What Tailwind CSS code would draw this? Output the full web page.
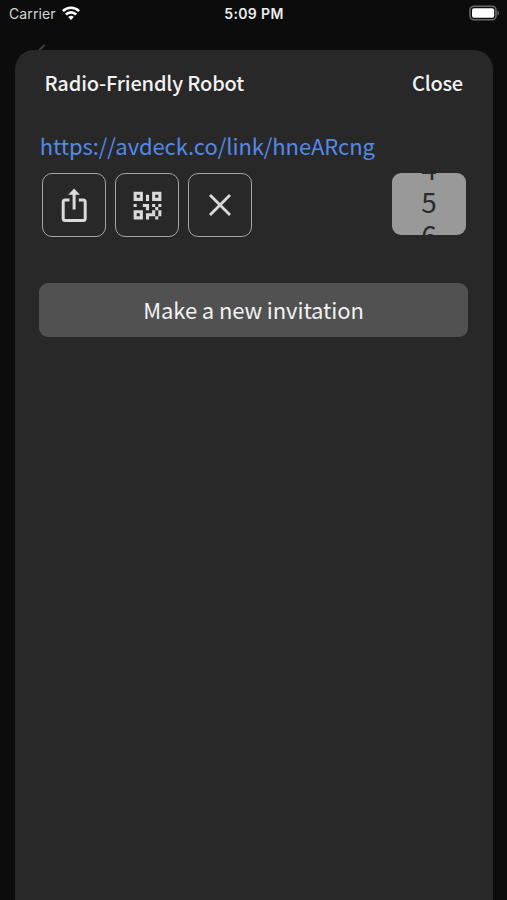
<!DOCTYPE html>
<html lang="en">
<head>
<meta charset="utf-8">
<title>Invitations</title>
<script src="https://cdn.jsdelivr.net/npm/@tailwindcss/browser@4"></script>
</head>
<body class="bg-[#0c0c0c]">
<div class="relative w-[507px] h-[900px] overflow-hidden flex flex-col bg-[#0c0c0c] font-['Noto_Sans_CJK_SC',sans-serif] text-[#f2f2f2]">
  <header class="h-[50px] shrink-0 grid grid-cols-3 items-start pt-1 px-[9px] font-['Inter',sans-serif] text-[14px] leading-5">
    <div class="flex items-center gap-[6px] text-[#d6d6d6]">
      <span class="tracking-[0.1px]">Carrier</span>
      <svg class="w-[18px] h-[14px] -mt-[3px]" viewBox="0 0 18 14" fill="none" stroke="#fff" stroke-width="2.6">
        <path d="M.9 5.1a11.4 11.4 0 0 1 16.2 0M3.9 8.5a7.1 7.1 0 0 1 10.2 0"/>
        <path d="M6.2 11a4 4 0 0 1 5.6 0L9 13.9z" fill="#fff" stroke="none"/>
      </svg>
    </div>
    <div class="text-center font-semibold tracking-[0.35px] text-[#ededed] pl-[1px] whitespace-nowrap">5:09 PM</div>
    <svg class="justify-self-end w-[31px] h-[16px] mt-px -mr-[2px]" viewBox="0 0 31 16">
      <rect x="1" y="1.2" width="26" height="13.6" rx="4" fill="#0c0c0c" stroke="#69696b" stroke-width="1.6"/>
      <rect x="3" y="3.2" width="22.2" height="9.6" rx="2" fill="#fff"/>
      <path d="M28.5 5.4c2 .8 2 4.4 0 5.2z" fill="#69696b"/>
    </svg>
  </header>
  <svg class="absolute left-[34px] top-[42px] w-[14px] h-[14px]" viewBox="0 0 14 14" fill="none" stroke="#3d3d3d" stroke-width="2.2"><path d="M10.5 3L2 11.5"/></svg>
  <main class="relative flex-1 ml-[15px] mr-[14px] rounded-t-[19px] bg-[#282828] px-[24px]">
    <div class="flex justify-between items-center h-[65px] pl-[5.5px] pr-[6px] text-[20px] font-medium tracking-[-0.15px]">
      <h1>Radio-Friendly Robot</h1>
      <button class="tracking-[-0.2px]">Close</button>
    </div>
    <a class="block ml-[0.8px] mt-[12px] h-[36px] leading-[36px] text-[22px] tracking-[-0.08px] text-[#5489e8] whitespace-nowrap">https://avdeck.co/link/hneARcng</a>
    <div class="flex justify-between mt-[10px] pl-[3px] pr-[3px]">
      <div class="flex gap-[9.3px]">
        <button class="size-[64px] rounded-[10px] border-[1.4px] border-[#a4a4a4] flex items-center justify-center">
          <svg class="w-[26px] h-[35px]" viewBox="0 0 26 35" fill="none" stroke="#dadada" stroke-width="3"><path d="M8.5 12H4.2Q2.2 12 2.2 14V30.5Q2.2 32.5 4.2 32.5H22.2Q24.2 32.5 24.2 30.5V14Q24.2 12 22.2 12H17.8M13.1 21.5V5"/><path d="M13.1 .5L19 6.8H7.2z" fill="#dadada" stroke="none"/></svg>
        </button>
        <button class="size-[64px] rounded-[10px] border-[1.4px] border-[#a4a4a4] flex items-center justify-center">
          <svg class="size-[37px]" viewBox="0 0 24 24" fill="#dadada"><path d="M3 11H5V13H3V11M11 5H13V9H11V5M9 11H13V15H11V13H9V11M15 11H17V13H19V11H21V13H19V15H21V19H19V21H17V19H13V21H11V17H15V15H17V13H15V11M19 19V15H17V19H19M15 3H21V9H15V3M17 5V7H19V5H17M3 3H9V9H3V3M5 5V7H7V5H5M3 15H9V21H3V15M5 17V19H7V17H5Z"/></svg>
        </button>
        <button class="-ml-[0.6px] size-[64px] rounded-[10px] border-[1.4px] border-[#a4a4a4] flex items-center justify-center">
          <svg class="size-[22px]" viewBox="0 0 22 22" fill="none" stroke="#dadada" stroke-width="2.8"><path d="M1 1L21 21M21 1L1 21"/></svg>
        </button>
      </div>
      <div class="w-[74px] h-[62px] rounded-[9px] bg-[#999] text-[#2b2b2b] overflow-hidden flex flex-col items-center justify-center text-[28px] leading-[33px]">
        <div class="flex flex-col items-center shrink-0 -mt-[5px]"><span>4</span><span>5</span><span>6</span></div>
      </div>
    </div>
    <button class="mt-[46px] w-[429px] h-[54px] pb-[2px] rounded-[9px] bg-[#515151] flex items-center justify-center text-[22px] tracking-[-0.1px]">Make a new invitation</button>
  </main>
</div>
</body>
</html>
